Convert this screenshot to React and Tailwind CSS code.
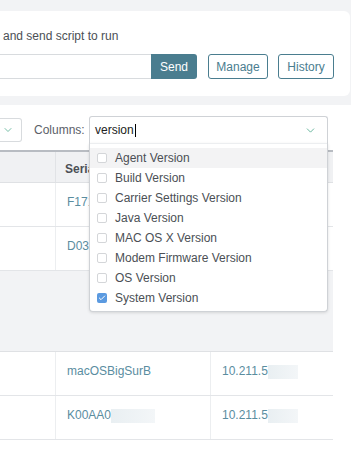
import { Check, ChevronDown } from "lucide-react";

const options = [
  { label: "Agent Version", checked: false, hover: true },
  { label: "Build Version", checked: false },
  { label: "Carrier Settings Version", checked: false },
  { label: "Java Version", checked: false },
  { label: "MAC OS X Version", checked: false },
  { label: "Modem Firmware Version", checked: false },
  { label: "OS Version", checked: false },
  { label: "System Version", checked: true },
];

function Blur({ w }) {
  return <span className="inline-block h-[14px] bg-gradient-to-r from-[#e9eff2] to-[#f3f6f8] align-middle" style={{ width: w }} />;
}

function Row({ serial, blurSerial, ip }) {
  return (
    <div className="flex h-[44px] border-b border-[#e3e5e8]">
      <div className="w-[56px] border-r border-[#eceef0]" />
      <div className="w-[155px] border-r border-[#eceef0] pl-[11px] pt-[10px] text-[12px] text-[#5a8d9f]">
        {serial}
        {blurSerial && <Blur w={44} />}
      </div>
      <div className="flex-1 pl-[11px] pt-[10px] text-[12px] text-[#5a8d9f]">
        {ip}
        {ip && <Blur w={30} />}
      </div>
    </div>
  );
}

export default function App() {
  return (
    <div className="relative h-[472px] w-[351px] overflow-hidden bg-[#f2f3f5] pt-[11px] font-['Liberation_Sans',Arial,sans-serif]">
      {/* script runner card */}
      <div className="mr-[1px] h-[85px] rounded-r-[6px] bg-white pt-[17px]">
        <div className="pl-[3px] text-[12px] leading-[16px] text-[#4b4f55]">and send script to run</div>
        <div className="mt-[10px] flex items-center">
          <div className="h-[25px] w-[151px] border-y border-[#d8dbde] bg-white" />
          <button className="h-[25px] w-[46px] rounded-r-[3px] bg-[#4a7d8f] text-[12px] text-white">Send</button>
          <button className="ml-[11px] h-[25px] w-[60px] rounded-[3px] border border-[#4a7d8f] text-[12px] text-[#4a7d8f]">Manage</button>
          <button className="ml-[10px] h-[25px] w-[56px] rounded-[3px] border border-[#4a7d8f] text-[12px] text-[#4a7d8f]">History</button>
        </div>
      </div>

      {/* table card */}
      <div className="mt-[9px] h-[400px] bg-white pt-[11px]">
        <div className="flex items-center">
          <div className="flex h-[24px] w-[22px] items-center justify-start rounded-r-[3px] border border-l-0 border-[#d8dbde] pl-[2px]">
            <ChevronDown size={12} strokeWidth={1.5} className="text-[#4aa88a]" />
          </div>
          <span className="ml-[12px] w-[55px] text-[12px] text-[#5b6068]">Columns:</span>
          <div className="flex h-[27px] w-[239px] items-center justify-between rounded-t-[3px] border border-b-0 border-[#cfd2d6] pl-[5px] pr-[10px]">
            <span className="flex items-center text-[12px] text-[#222]">
              version<span className="ml-[1px] inline-block h-[13px] w-[1px] bg-black" />
            </span>
            <ChevronDown size={13} strokeWidth={1.5} className="text-[#4aa88a]" />
          </div>
        </div>

        <div className="mt-[7px] w-[333px]">
          <div className="flex h-[33px] border-t-2 border-b border-t-[#b8bcc2] border-b-[#dfe1e4] bg-[#f0f1f3]">
            <div className="w-[56px] border-r border-[#e1e3e6]" />
            <div className="whitespace-nowrap pl-[9px] pt-[8px] text-[12px] font-bold text-[#4b4f55]">Serial</div>
          </div>
          <Row serial="F171" ip="" />
          <Row serial="D03" ip="" />
          <div className="h-[81px] border-b border-[#dfe1e4] bg-[#f2f3f5]" />
          <Row serial="macOSBigSurB" ip="10.211.5" />
          <Row serial="K00AA0" blurSerial ip="10.211.5" />
        </div>
      </div>

      {/* column picker dropdown */}
      <div className="absolute left-[89px] top-[143px] h-[169px] w-[239px] rounded-b-[4px] border border-t-0 border-[#cfd2d6] bg-white pt-[5px] shadow-[0_1px_3px_rgba(0,0,0,0.12)]">
        <div className="absolute left-0 right-0 top-0 h-px bg-[#eceef0]" />
        {options.map((o) => (
          <div
            key={o.label}
            className={`flex h-[20px] items-center pl-[7px] text-[12px] text-[#4b4f55] ${o.hover ? "bg-[#f3f3f4]" : ""}`}
          >
            {o.checked ? (
              <span className="flex h-[10px] w-[10px] items-center justify-center rounded-[2px] bg-[#5b9ae0]">
                <Check size={8} strokeWidth={3} className="text-white" />
              </span>
            ) : (
              <span className="h-[10px] w-[10px] rounded-[2px] border border-[#d4d6d9] bg-white" />
            )}
            <span className="ml-[8px]">{o.label}</span>
          </div>
        ))}
      </div>
    </div>
  );
}
